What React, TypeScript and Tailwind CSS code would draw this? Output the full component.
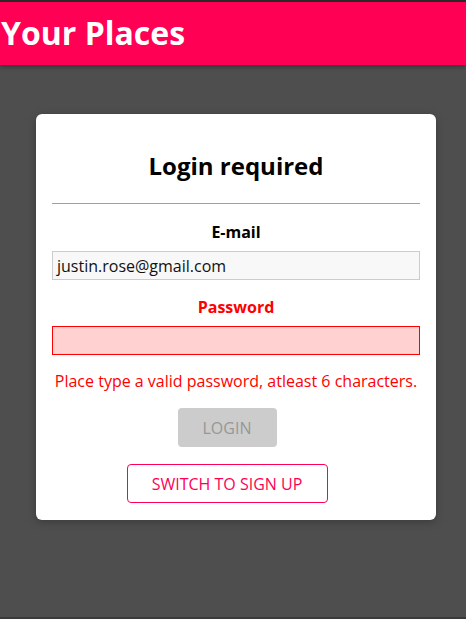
export default function App() {
  const font = { fontFamily: '"Open Sans", sans-serif' };
  return (
    <div style={font} className="w-[466px] h-[619px] bg-[#4e4e4e] border-t-2 border-b-2 border-t-[#2b2b2b] border-b-[#3a3a3a] flex flex-col">
      <header className="h-[63px] bg-[#ff0055] flex items-center shadow-[0_2px_4px_rgba(0,0,0,0.3)] shrink-0">
        <h1 className="text-[32px] font-bold text-white leading-none pl-[1px] pb-[2px]">Your Places</h1>
      </header>
      <div className="mt-[49px] mx-[36px] w-[400px] bg-white rounded-md shadow-[0_2px_8px_rgba(0,0,0,0.26)] px-4 pt-[34px] pb-[17px] flex flex-col items-center">
        <h2 className="text-[24px] font-bold leading-[36px] text-black">Login required</h2>
        <div className="w-full border-t border-[#a0a0a0] mt-[19px]" />
        <label className="mt-[16px] text-[16px] font-bold leading-[24px] text-black">E-mail</label>
        <div className="w-full mt-[7px] h-[29px] bg-[#f8f8f8] border border-[#cccccc] flex items-center px-[4px] text-[16px] text-[#111]">
          justin.rose@gmail.com
        </div>
        <label className="mt-[15px] text-[16px] font-bold leading-[24px] text-[#ff0000]">Password</label>
        <div className="w-full mt-[7px] h-[29px] bg-[#ffd1d1] border border-[#ff0000]" />
        <p className="mt-[14px] text-[16px] leading-[24px] text-[#ff0000]">Place type a valid password, atleast 6 characters.</p>
        <button className="mt-[15px] mr-[18px] w-[99px] h-[39px] bg-[#cccccc] text-[#979797] rounded-[4px] text-[16px]">LOGIN</button>
        <button className="mt-[17px] mr-[18px] w-[201px] h-[39px] border border-[#ff0055] text-[#ff0055] rounded-[4px] text-[16px] bg-white">SWITCH TO SIGN UP</button>
      </div>
    </div>
  );
}
